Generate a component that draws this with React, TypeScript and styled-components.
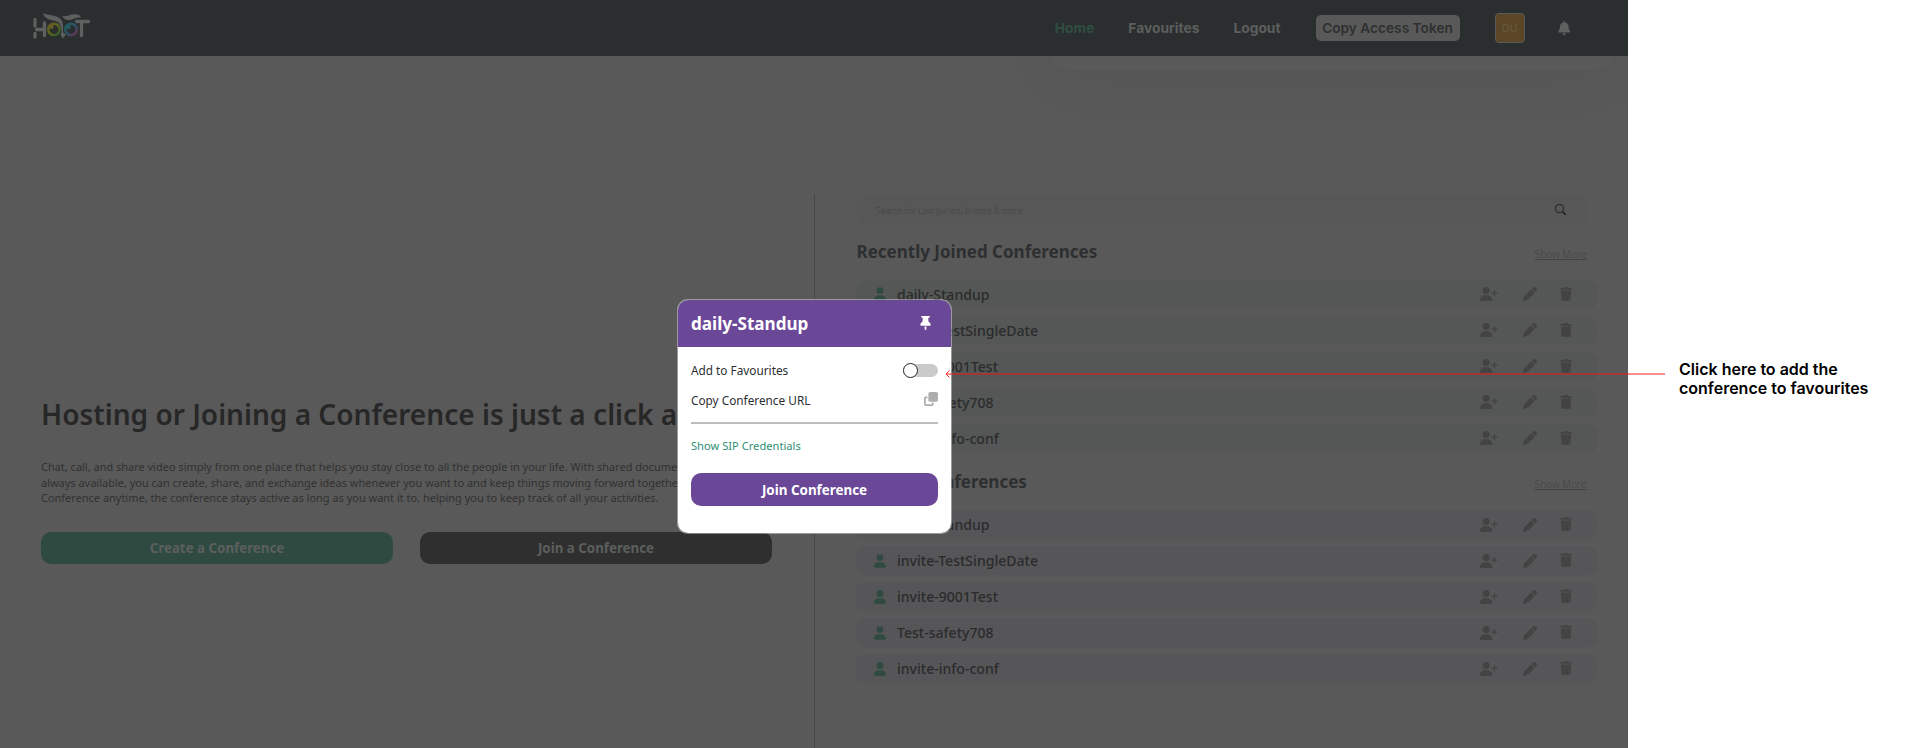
import React from "react";
import styled, { createGlobalStyle, css } from "styled-components";
import { FaUser, FaUserPlus, FaPen, FaTrash, FaBell, FaThumbtack, FaClone } from "react-icons/fa6";
import { BsSearch } from "react-icons/bs";

const GlobalStyle = createGlobalStyle`
  * { box-sizing: border-box; }
  body { margin: 0; background: #fff; overflow: hidden; }
  h1, h2, h3, p { margin: 0; }
  button, a { font-family: inherit; }
`;

const Board = styled.div`
  position: relative;
  display: flex;
  width: 1905px;
  height: 748px;
  font-family: "Noto Sans", sans-serif;
`;

const Screen = styled.div`
  position: relative;
  display: flex;
  flex-direction: column;
  width: 1628px;
  height: 748px;
  background: #595959;
  overflow: hidden;
`;

const Header = styled.header`
  position: relative;
  z-index: 1;
  display: flex;
  align-items: center;
  height: 56px;
  padding: 0 57px 0 32px;
  background: #2b2e2f;
  font-family: Inter, sans-serif;
`;

const MenuShade = styled.div`
  position: absolute;
  top: 0;
  right: 14px;
  width: 565px;
  height: 70px;
  border-radius: 20px;
  box-shadow: 0 10px 60px rgba(0, 0, 0, 0.05);
`;

const Nav = styled.nav`
  display: flex;
  align-items: center;
  margin-left: auto;
`;

const NavLink = styled.a<{ $active?: boolean; $gap: number }>`
  margin-right: ${(p) => p.$gap}px;
  color: ${(p) => (p.$active ? "#2f4e43" : "#5d5e5e")};
  font-size: 13.8px;
  font-weight: 700;
  line-height: 20px;
`;

const TokenButton = styled.button`
  width: 144px;
  height: 26px;
  padding: 0;
  border: 0;
  border-radius: 5px;
  background: #595959;
  color: #2d3031;
  font-size: 13.7px;
  font-weight: 600;
  white-space: nowrap;
`;

const Avatar = styled.div`
  display: grid;
  place-items: center;
  width: 30px;
  height: 30px;
  margin: 0 34px 0 35px;
  border: 1px solid #5a5a58;
  border-radius: 4px;
  background: #5a4626;
  color: #66583c;
  font-size: 11px;
`;

const Main = styled.main`
  display: flex;
  flex: 1;
  min-height: 0;
`;

const Intro = styled.section`
  width: 814px;
  padding: 338px 0 0 41px;
`;

const IntroTitle = styled.h1`
  height: 40px;
  color: #272727;
  font-size: 28.05px;
  font-weight: 600;
  line-height: 40px;
  white-space: nowrap;
`;

const IntroText = styled.p`
  margin-top: 25px;
  color: #313131;
  font-size: 10.97px;
  line-height: 15.5px;
  white-space: nowrap;
`;

const Actions = styled.div`
  display: flex;
  gap: 27px;
  margin-top: 26.5px;
`;

const ActionButton = styled.button<{ $tone: "green" | "dark" }>`
  width: 352px;
  height: 32px;
  padding: 0;
  border: 0;
  border-radius: 10px;
  background: ${(p) => (p.$tone === "green" ? "#2f4b41" : "#2f2f2f")};
  color: #5c5f5d;
  font-size: 13.33px;
  font-weight: 700;
  line-height: 32px;
`;

const Lists = styled.section`
  display: flex;
  flex-direction: column;
  width: 814px;
  margin-top: 138px;
  padding: 1px 31px 0 41.5px;
  border-left: 1px solid #484848;
`;

const SearchBar = styled.div`
  display: flex;
  align-items: center;
  justify-content: space-between;
  width: 730px;
  height: 30px;
  padding: 1px 21px 0 19.5px;
  border-radius: 10px;
  background: #575757;
  color: #454545;
  font-size: 8.6px;
  font-weight: 300;
`;

const ListHead = styled.div<{ $second?: boolean }>`
  display: flex;
  align-items: center;
  justify-content: space-between;
  width: 730px;
  height: 26px;
  margin-top: ${(p) => (p.$second ? 16.5 : 13.5)}px;
  margin-bottom: 15px;
`;

const ListTitle = styled.h2`
  color: #2d2f31;
  font-size: 17px;
  font-weight: 700;
  line-height: 26px;
  white-space: nowrap;
`;

const ShowMore = styled.a`
  padding-top: 4px;
  color: #444444;
  font-size: 10.2px;
  font-weight: 300;
  text-decoration: underline;
`;

const Rows = styled.div`
  display: flex;
  flex-direction: column;
  gap: 7px;
  margin-left: -1px;
`;

const Row = styled.div<{ $tint: string }>`
  display: flex;
  align-items: center;
  width: 741.5px;
  height: 29px;
  padding: 0 25px 0 18px;
  border-radius: 9px;
  background: ${(p) => p.$tint};
  color: #434343;
`;

const RowName = styled.span`
  flex: 1;
  padding: 0 0 0 11.5px;
  color: #2b2b2b;
  font-size: 14.05px;
  font-weight: 500;
`;

const RowIcons = styled.span`
  display: flex;
  align-items: center;
`;

const iconBase = css`
  display: block;
  flex: none;
`;
const UserMark = styled(FaUser)`
  ${iconBase}
  width: 12px;
  height: 14px;
  color: #2f4b41;
`;
const AddMark = styled(FaUserPlus)`
  ${iconBase}
  width: 17.5px;
  height: 14px;
  margin-right: 25.5px;
`;
const PenMark = styled(FaPen)`
  ${iconBase}
  width: 14px;
  height: 14px;
  margin-right: 23px;
`;
const TrashMark = styled(FaTrash)`
  ${iconBase}
  width: 12px;
  height: 14px;
  margin-top: -1px;
`;
const BellMark = styled(FaBell)`
  ${iconBase}
  width: 12.5px;
  height: 14px;
  margin: 0 1px 0 -1px;
  color: #5f6060;
`;
const PinMark = styled(FaThumbtack)`
  ${iconBase}
  width: 11px;
  height: 14px;
  margin: -3px 7px 0 0;
  color: #fff;
`;
const CloneMark = styled(FaClone)`
  ${iconBase}
  width: 14px;
  height: 14px;
  margin-top: -3px;
  color: #adadad;
`;
const SearchMark = styled(BsSearch)`
  ${iconBase}
  width: 11px;
  height: 11px;
  margin-top: -2px;
  stroke: #242424;
  stroke-width: 0.4;
  color: #242424;
`;

const Dialog = styled.div`
  position: absolute;
  top: 299px;
  left: 677px;
  z-index: 2;
  width: 275px;
  height: 235px;
  border: 1px solid rgba(255, 255, 255, 0.4);
  border-radius: 11px;
  background: #fff;
  background-clip: padding-box;
  overflow: hidden;
`;

const DialogHead = styled.div`
  display: flex;
  align-items: center;
  justify-content: space-between;
  height: 47px;
  padding: 1px 13px 0;
  background: #6a4897;
`;

const DialogTitle = styled.h3`
  color: #fff;
  font-size: 17.1px;
  font-weight: 700;
  line-height: 24px;
`;

const DialogBody = styled.div`
  display: flex;
  flex-direction: column;
  padding: 8px 13px 0;
`;

const Option = styled.div`
  display: flex;
  align-items: center;
  justify-content: space-between;
  height: 30px;
  color: #2d2f33;
  font-size: 11.8px;
`;

const Track = styled.span`
  display: flex;
  align-items: center;
  width: 35px;
  height: 13px;
  border-radius: 7px;
  background: #cacaca;
`;

const Knob = styled.span`
  flex: none;
  width: 15px;
  height: 15px;
  border: 1px solid #222;
  border-radius: 50%;
  background: #fff;
`;

const Rule = styled.hr`
  width: 100%;
  height: 2px;
  margin: 7px 0 0;
  border: 0;
  background: #bdbdbd;
`;

const SipLink = styled.a`
  margin-top: 13px;
  color: #2f8f74;
  font-size: 11.15px;
  line-height: 18px;
`;

const JoinButton = styled.button`
  height: 33px;
  margin-top: 18px;
  padding: 1px 0 0;
  border: 0;
  border-radius: 10px;
  background: #6a4897;
  color: #fff;
  font-size: 13.4px;
  font-weight: 700;
`;

const Pointer = styled.svg`
  position: absolute;
  top: 369px;
  left: 945px;
  z-index: 3;
`;

const Note = styled.aside`
  padding: 360px 0 0 51px;
  color: #000;
  font-family: Inter, sans-serif;
  font-size: 16px;
  font-weight: 600;
  line-height: 19px;
  white-space: nowrap;
`;

const LogoArt = styled.svg`
  overflow: visible;
`;

const Logo = () => (
  <LogoArt width="60" height="28" viewBox="0 0 60 28" fill="none">
    <defs>
      <linearGradient id="leftEye" x1="0" y1="0" x2="1" y2="1">
        <stop offset="0" stopColor="#6a5d20" />
        <stop offset="0.5" stopColor="#59641f" />
        <stop offset="1" stopColor="#2b5b2b" />
      </linearGradient>
      <linearGradient id="rightEye" x1="0" y1="0" x2="1" y2="1">
        <stop offset="0.2" stopColor="#235b61" />
        <stop offset="0.55" stopColor="#304f63" />
        <stop offset="1" stopColor="#6a2f57" />
      </linearGradient>
    </defs>
    <g stroke="#5e5f5f" strokeWidth="3.3" strokeLinecap="round">
      <path d="M3 5.500V12M3 19.500V23M4.500 15.500H12M12.500 9V21.500M44.500 7.500H56.500M49.500 8V21.500" />
    </g>
    <circle cx="22" cy="15.500" r="5.700" stroke="url(#leftEye)" strokeWidth="2.600" />
    <circle cx="39" cy="15.500" r="5.700" stroke="url(#rightEye)" strokeWidth="2.600" />
    <circle cx="19.500" cy="12.800" r="2.200" fill="#645c22" />
    <circle cx="36.600" cy="12.800" r="2.200" fill="#235b61" />
    <path
      d="M11 -1C15 1.300 22 .8 26.500 3.500C30 5.500 31 8.500 31 12.500V18.500L33.800 20.500L31 24.500L28.300 20.500L29.700 18C29.500 12 28 8.500 23.500 7C18 5.500 12 5 11 -1Z"
      fill="#5e5f5f"
    />
    <path d="M30 1.500C34 4 38 -.5 44 .2Q48.500 .8 48.800 3.500C43 3 41 6 36.500 6Q32 6 30 1.500Z" fill="#5e5f5f" />
  </LogoArt>
);

const names = ["daily-Standup", "invite-TestSingleDate", "invite-9001Test", "Test-safety708", "invite-info-conf"];

const ConferenceList = ({ title, tint, second }: { title: string; tint: string; second?: boolean }) => (
  <>
    <ListHead $second={second}>
      <ListTitle>{title}</ListTitle>
      <ShowMore>Show More</ShowMore>
    </ListHead>
    <Rows>
      {names.map((name) => (
        <Row key={name} $tint={tint}>
          <UserMark />
          <RowName>{name}</RowName>
          <RowIcons>
            <AddMark />
            <PenMark />
            <TrashMark />
          </RowIcons>
        </Row>
      ))}
    </Rows>
  </>
);

export default function App() {
  return (
    <Board>
      <GlobalStyle />
      <Screen>
        <MenuShade />
        <Header>
          <Logo />
          <Nav>
            <NavLink $active $gap={34}>Home</NavLink>
            <NavLink $gap={34}>Favourites</NavLink>
            <NavLink $gap={35}>Logout</NavLink>
            <TokenButton>Copy Access Token</TokenButton>
            <Avatar>DU</Avatar>
            <BellMark />
          </Nav>
        </Header>
        <Main>
          <Intro>
            <IntroTitle>Hosting or Joining a Conference is just a click away</IntroTitle>
            <IntroText>
              Chat, call, and share video simply from one place that helps you stay close to all the people in your life. With shared documents
              <br />
              always available, you can create, share, and exchange ideas whenever you want to and keep things moving forward together.
              <br />
              Conference anytime, the conference stays active as long as you want it to, helping you to keep track of all your activities.
            </IntroText>
            <Actions>
              <ActionButton $tone="green">Create a Conference</ActionButton>
              <ActionButton $tone="dark">Join a Conference</ActionButton>
            </Actions>
          </Intro>
          <Lists>
            <SearchBar>
              Search for Last Joined, Invited &amp; more
              <SearchMark />
            </SearchBar>
            <ConferenceList title="Recently Joined Conferences" tint="#545756" />
            <ConferenceList title="Invited Conferences" tint="#565659" second />
          </Lists>
        </Main>
        <Dialog>
          <DialogHead>
            <DialogTitle>daily-Standup</DialogTitle>
            <PinMark />
          </DialogHead>
          <DialogBody>
            <Option>
              Add to Favourites
              <Track>
                <Knob />
              </Track>
            </Option>
            <Option>
              Copy Conference URL
              <CloneMark />
            </Option>
            <Rule />
            <SipLink>Show SIP Credentials</SipLink>
            <JoinButton>Join Conference</JoinButton>
          </DialogBody>
        </Dialog>
      </Screen>
      <Note>
        Click here to add the
        <br />
        conference to favourites
      </Note>
      <Pointer width="720" height="10" viewBox="0 0 720 10" fill="none">
        <path d="M1 5H720" stroke="#f21414" strokeOpacity="0.48" strokeWidth="2" />
        <path d="M4.500 1.500L1 5L4.500 8.500" stroke="#f03030" strokeWidth="1" />
      </Pointer>
    </Board>
  );
}
